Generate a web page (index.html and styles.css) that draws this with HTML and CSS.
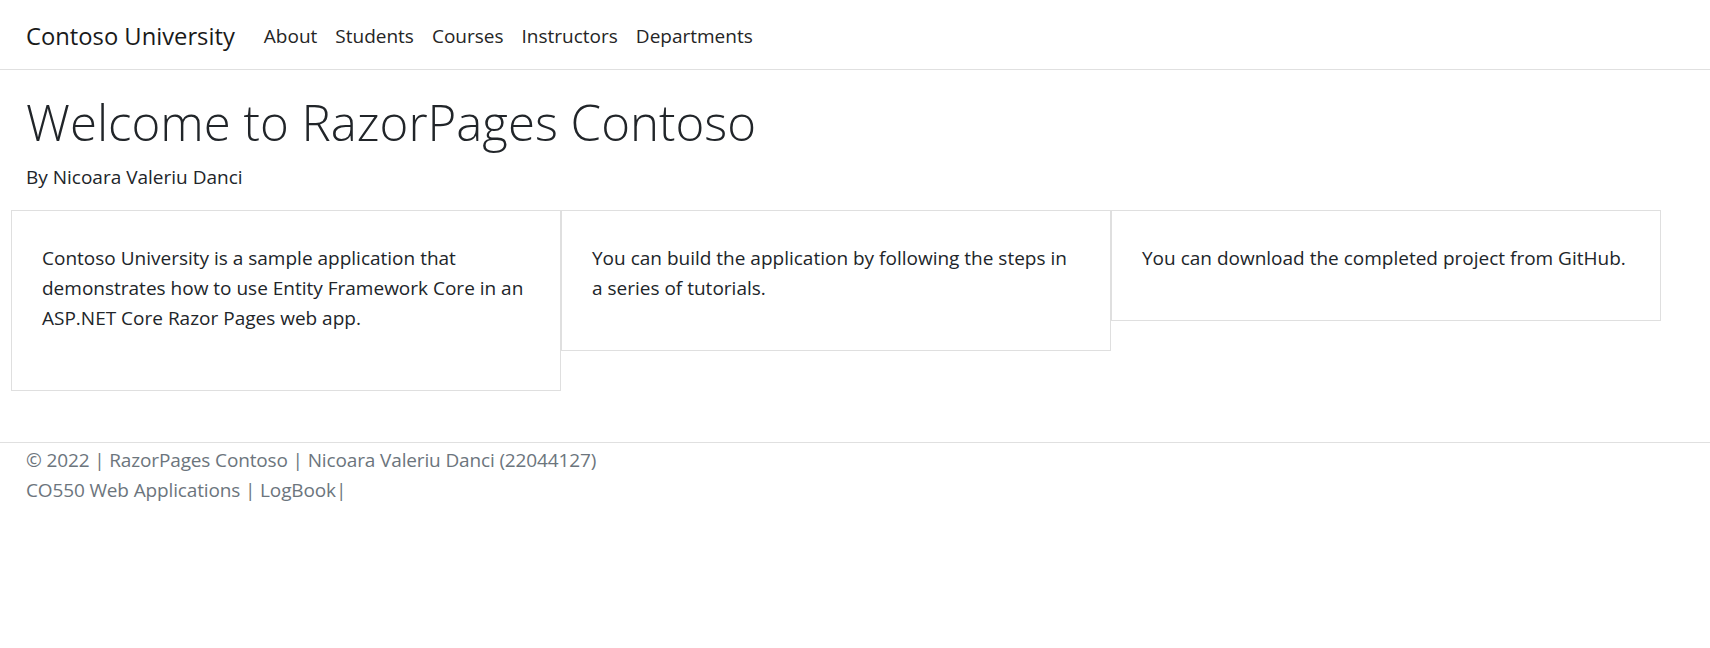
FILE: index.html
```html
<!DOCTYPE html>
<html lang="en">
<head>
<meta charset="utf-8">
<title>RazorPages Contoso</title>
<link rel="stylesheet" href="styles.css">
</head>
<body>
<header class="navbar">
  <a class="brand" href="#">Contoso University</a>
  <nav class="nav-links">
    <a href="#">About</a>
    <a href="#">Students</a>
    <a href="#">Courses</a>
    <a href="#">Instructors</a>
    <a href="#">Departments</a>
  </nav>
</header>
<main class="main">
  <section class="intro">
    <h1 class="display">Welcome to RazorPages Contoso</h1>
    <p class="byline">By Nicoara Valeriu Danci</p>
  </section>
  <div class="cards">
    <div class="card card-tall">
      <p>Contoso University is a sample application that demonstrates how to use Entity Framework Core in an ASP.NET Core Razor Pages web app.</p>
    </div>
    <div class="card">
      <p>You can build the application by following the steps in a series of tutorials.</p>
    </div>
    <div class="card">
      <p>You can download the completed project from GitHub.</p>
    </div>
  </div>
</main>
<footer class="footer">
  <div class="footer-line">&copy; 2022 | RazorPages Contoso | Nicoara Valeriu Danci (22044127)</div>
  <div class="footer-line">CO550 Web Applications | <a href="#">LogBook</a>|</div>
</footer>
</body>
</html>
```

FILE: styles.css
```css
html, body {
  margin: 0;
  padding: 0;
  background: #fff;
}
body {
  font-family: "Open Sans", "Noto Sans", sans-serif;
  font-size: 19px;
  line-height: 30px;
  color: #212529;
}
a {
  color: inherit;
  text-decoration: none;
}
.navbar {
  display: flex;
  align-items: center;
  height: 67px;
  padding: 2px 26px 0;
  border-bottom: 1px solid #e0e0e0;
  box-sizing: content-box;
}
.brand {
  font-size: 23.75px;
  line-height: 36px;
  margin-right: 29px;
  color: #1a1a1a;
}
.nav-links {
  display: flex;
  gap: 18px;
}
.nav-links a {
  font-size: 19px;
  color: #252525;
}
.intro {
  padding: 22px 26px 0;
}
.display {
  margin: 0 0 10px;
  font-size: 49.2px;
  line-height: 60px;
  font-weight: 300;
}
.byline {
  margin: 0 0 18px;
}
.cards {
  display: flex;
  align-items: flex-start;
  padding-left: 11px;
}
.card {
  width: 550px;
  box-sizing: border-box;
  border: 1px solid #dfdfdf;
  padding: 32px 30px 47px;
}
.card-tall {
  padding-bottom: 57px;
}
.card p {
  margin: 0;
}
.footer {
  margin-top: 51px;
  border-top: 1px solid #e0e0e0;
  padding: 2px 26px 0;
  color: #6c757d;
  letter-spacing: -0.14px;
}
```
